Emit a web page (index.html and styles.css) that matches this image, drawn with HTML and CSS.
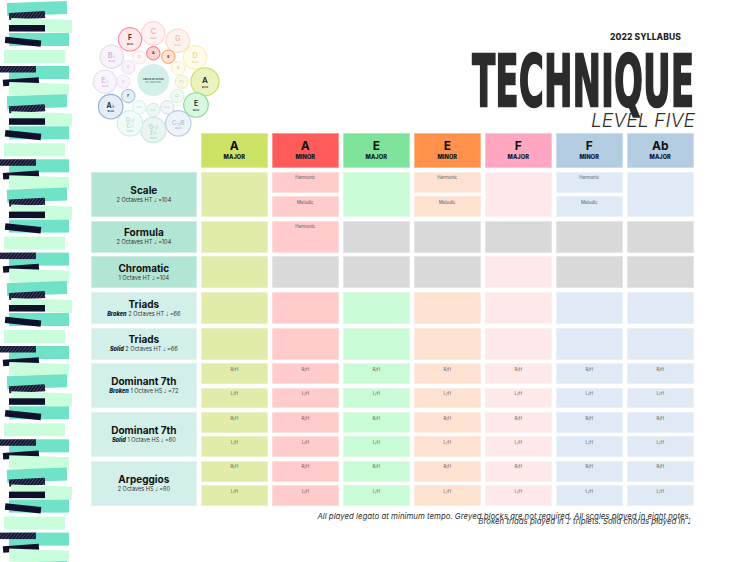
FILE: index.html
```html
<!DOCTYPE html>
<html lang="en">
<head>
<meta charset="utf-8">
<title>Technique Level Five</title>
<link rel="stylesheet" href="styles.css">
</head>
<body>
<div class="page">
  <svg class="strip" viewBox="0 0 72 562" width="72" height="562" aria-hidden="true">
    <defs>
      <pattern id="hatch" width="2.6" height="2.6" patternUnits="userSpaceOnUse" patternTransform="rotate(40)">
        <rect width="2.6" height="2.6" fill="#10112e"/>
        <rect width="0.9" height="2.6" fill="#4a4b68"/>
      </pattern>
      <g id="unit">
        <rect x="7" y="2" width="60" height="13" fill="#6fe2c8" transform="rotate(-2 37 8)"/>
        <rect x="9" y="12" width="36" height="7" fill="url(#hatch)" transform="rotate(-3 27 15)"/>
        <rect x="11" y="19" width="61" height="13" fill="#c9fddb" transform="rotate(2 41 25)"/>
        <rect x="9" y="25" width="36" height="6.5" fill="#0f102c"/>
        <rect x="9" y="33" width="60" height="13" fill="#6fe2c8"/>
        <rect x="5" y="38.5" width="36" height="6.5" fill="#0f102c" transform="rotate(6 23 42)"/>
        <rect x="4" y="50" width="61" height="13" fill="#c9fddb"/>
        <rect x="9" y="66" width="60" height="13" fill="#6fe2c8"/>
        <rect x="0" y="66" width="36" height="6.5" fill="url(#hatch)"/>
        <rect x="3" y="78.5" width="36" height="6.5" fill="#0f102c" transform="rotate(-4 21 82)"/>
        <rect x="9" y="83" width="60" height="13" fill="#c9fddb" transform="rotate(2 39 89)"/>
      </g>
    </defs>
    <use href="#unit" y="0"/>
    <use href="#unit" y="93.3"/>
    <use href="#unit" y="186.6"/>
    <use href="#unit" y="280"/>
    <use href="#unit" y="373.3"/>
    <use href="#unit" y="466.6"/>
    <use href="#unit" y="560"/>
  </svg>

  <main class="main">
    <header class="top">
      <svg class="wheel" viewBox="0 0 130 125" width="130" height="125" aria-label="Circle of fifths">
        <g class="outer">
          <circle cx="63.3" cy="13.3" r="11.7" fill="#fff2f2" stroke="#fdd3d3"/>
          <circle cx="87.7" cy="20.7" r="11.7" fill="#fff3ee" stroke="#fdd6c6"/>
          <circle cx="105" cy="37.3" r="11.7" fill="#fffbea" stroke="#fbefb3"/>
          <circle cx="115" cy="61.7" r="14" fill="#eaf3c0" stroke="#c6dd5c"/>
          <circle cx="106" cy="85" r="12.3" fill="#d9f7de" stroke="#7fdc8e"/>
          <circle cx="88.3" cy="103.3" r="12.7" fill="#eef3f9" stroke="#b7cbe1"/>
          <circle cx="63.3" cy="110" r="12.7" fill="#e9f5f2" stroke="#c7e6de"/>
          <circle cx="40" cy="103.3" r="12.7" fill="#f1fbf9" stroke="#cdeee8"/>
          <circle cx="20.7" cy="86.7" r="12.3" fill="#e5edf6" stroke="#94b0d1"/>
          <circle cx="15" cy="61.7" r="11.7" fill="#faf4fc" stroke="#eadbf2"/>
          <circle cx="21.7" cy="36.7" r="11.7" fill="#f8f2fb" stroke="#e5d5ef"/>
          <circle cx="40" cy="19.3" r="11.7" fill="#ffe9ec" stroke="#f6909f"/>
        </g>
        <g class="inner">
          <circle cx="63.3" cy="33.3" r="6.7" fill="#ffd3d3" stroke="#ff5c5c"/>
          <circle cx="78.3" cy="36.7" r="6.7" fill="#ffe2d0" stroke="#ff914d"/>
          <circle cx="88.3" cy="48.3" r="6.7" fill="#fffbee" stroke="#f7ecbc"/>
          <circle cx="91.7" cy="61.7" r="6.7" fill="#f6f9e6" stroke="#e5eec0"/>
          <circle cx="87.3" cy="76" r="6.7" fill="#effbf2" stroke="#c9efd2"/>
          <circle cx="77.3" cy="87.3" r="6.7" fill="#f3f7fb" stroke="#ccdbe9"/>
          <circle cx="63.3" cy="90" r="6.7" fill="#eef7f5" stroke="#cfe8e2"/>
          <circle cx="49.3" cy="87.3" r="6.7" fill="#f3fcfa" stroke="#d2f1eb"/>
          <circle cx="38.3" cy="76" r="6.7" fill="#e5edf6" stroke="#94b0d1"/>
          <circle cx="33.3" cy="61.7" r="6.7" fill="#faf5fc" stroke="#ecdff3"/>
          <circle cx="38.3" cy="47.3" r="6.7" fill="#f9f4fb" stroke="#e7d9f0"/>
          <circle cx="49.3" cy="37.3" r="6.7" fill="#fff7f8" stroke="#fbdde1"/>
        </g>
        <circle cx="63.3" cy="60" r="16" fill="#d3efe9"/>
        <text class="wc" x="63.3" y="59.5">CIRCLE OF FIFTHS</text>
        <text class="wcs" x="63.3" y="62.5">KEY SIGNATURES</text>

        <g class="ol">
          <text x="63.3" y="14" fill="#e4b5b5">C</text>
          <text x="87.7" y="21.4" fill="#efbfae">G</text>
          <text x="105" y="38" fill="#e9d894">D</text>
          <text x="115" y="63" fill="#222" class="big">A</text>
          <text x="106" y="86" fill="#222">E</text>
          <text x="88.3" y="104.5" fill="#a9bdd3" class="mid">C♭/B</text>
          <text x="63.3" y="108.5" fill="#a8cfc4" class="mid">G♭/</text>
          <text x="63.3" y="115" fill="#a8cfc4" class="mid">F♯</text>
          <text x="40" y="101.8" fill="#acd9d0" class="mid">D♭/</text>
          <text x="40" y="108.3" fill="#acd9d0" class="mid">C♯</text>
          <text x="20.7" y="87.5" fill="#222">A♭</text>
          <text x="15" y="62.5" fill="#cfb9dc">E♭</text>
          <text x="21.7" y="37.5" fill="#c9b3d9">B♭</text>
          <text x="40" y="20" fill="#222">F</text>
        </g>
        <g class="om">
          <text x="63.3" y="18.5" fill="#e4b5b5">MAJOR</text>
          <text x="87.7" y="25.9" fill="#efbfae">MAJOR</text>
          <text x="105" y="42.5" fill="#e9d894">MAJOR</text>
          <text x="115" y="68" fill="#333">MAJOR</text>
          <text x="106" y="90.5" fill="#333">MAJOR</text>
          <text x="88.3" y="109" fill="#a9bdd3">MAJOR</text>
          <text x="63.3" y="119" fill="#a8cfc4">MAJOR</text>
          <text x="40" y="112.3" fill="#acd9d0">MAJOR</text>
          <text x="20.7" y="92" fill="#333">MAJOR</text>
          <text x="15" y="67" fill="#cfb9dc">MAJOR</text>
          <text x="21.7" y="42" fill="#c9b3d9">MAJOR</text>
          <text x="40" y="24.5" fill="#333">MAJOR</text>
        </g>
        <g class="il">
          <text x="63.3" y="34.3" fill="#222">A</text>
          <text x="78.3" y="37.7" fill="#222">E</text>
          <text x="88.3" y="49.3" fill="#dccd95">B</text>
          <text x="91.7" y="62.7" fill="#c8d39a">F♯</text>
          <text x="87.3" y="77" fill="#a9d8b5">C♯</text>
          <text x="77.3" y="88" fill="#b1c4d8" class="sm">G♯/A♭</text>
          <text x="63.3" y="90.7" fill="#aed2c9" class="sm">D♯/E♭</text>
          <text x="49.3" y="88" fill="#ace0d5" class="sm">A♯/B♭</text>
          <text x="38.3" y="77" fill="#222">F</text>
          <text x="33.3" y="62.7" fill="#d8c5e2">C</text>
          <text x="38.3" y="48.3" fill="#d3bfe0">G</text>
          <text x="49.3" y="38.3" fill="#efbcc3">D</text>
        </g>
      </svg>
      <div class="title">
        <div class="syllabus">2022 SYLLABUS</div>
        <h1 class="technique"><span>TECHNIQUE</span></h1>
        <div class="level">LEVEL FIVE</div>
      </div>
    </header>

    <div class="grid">
      <div class="corner"></div>
      <div class="head amaj-h"><b>A</b><span>MAJOR</span></div>
      <div class="head amin-h"><b>A</b><span>MINOR</span></div>
      <div class="head emaj-h"><b>E</b><span>MAJOR</span></div>
      <div class="head emin-h"><b>E</b><span>MINOR</span></div>
      <div class="head fmaj-h"><b>F</b><span>MAJOR</span></div>
      <div class="head fmin-h"><b>F</b><span>MINOR</span></div>
      <div class="head abmaj-h"><b>Ab</b><span>MAJOR</span></div>

      <!-- Scale -->
      <div class="label lab1"><b>Scale</b><span>2 Octaves HT ♩ =104</span></div>
      <div class="cell amaj"></div>
      <div class="split"><div class="cell amin">Harmonic</div><div class="cell amin">Melodic</div></div>
      <div class="cell emaj"></div>
      <div class="split"><div class="cell emin">Harmonic</div><div class="cell emin">Melodic</div></div>
      <div class="cell fmaj"></div>
      <div class="split"><div class="cell fmin">Harmonic</div><div class="cell fmin">Melodic</div></div>
      <div class="cell abmaj"></div>

      <!-- Formula -->
      <div class="label lab1"><b>Formula</b><span>2 Octaves HT ♩ =104</span></div>
      <div class="cell amaj"></div>
      <div class="cell amin">Harmonic</div>
      <div class="cell grey"></div>
      <div class="cell grey"></div>
      <div class="cell grey"></div>
      <div class="cell grey"></div>
      <div class="cell grey"></div>

      <!-- Chromatic -->
      <div class="label lab1"><b>Chromatic</b><span>1 Octave HT ♩ =104</span></div>
      <div class="cell amaj"></div>
      <div class="cell grey"></div>
      <div class="cell grey"></div>
      <div class="cell grey"></div>
      <div class="cell fmaj"></div>
      <div class="cell grey"></div>
      <div class="cell grey"></div>

      <!-- Triads broken -->
      <div class="label lab2"><b>Triads</b><span><em>Broken</em> 2 Octaves HT ♩ =66</span></div>
      <div class="cell amaj"></div>
      <div class="cell amin"></div>
      <div class="cell emaj"></div>
      <div class="cell emin"></div>
      <div class="cell fmaj"></div>
      <div class="cell fmin"></div>
      <div class="cell abmaj"></div>

      <!-- Triads solid -->
      <div class="label lab2"><b>Triads</b><span><em>Solid</em> 2 Octaves HT ♩ =66</span></div>
      <div class="cell amaj"></div>
      <div class="cell amin"></div>
      <div class="cell emaj"></div>
      <div class="cell emin"></div>
      <div class="cell fmaj"></div>
      <div class="cell fmin"></div>
      <div class="cell abmaj"></div>

      <!-- Dominant 7th broken -->
      <div class="label lab2"><b>Dominant 7th</b><span><em>Broken</em> 1 Octave HS ♩ =72</span></div>
      <div class="split"><div class="cell amaj">R/H</div><div class="cell amaj">L/H</div></div>
      <div class="split"><div class="cell amin">R/H</div><div class="cell amin">L/H</div></div>
      <div class="split"><div class="cell emaj">R/H</div><div class="cell emaj">L/H</div></div>
      <div class="split"><div class="cell emin">R/H</div><div class="cell emin">L/H</div></div>
      <div class="split"><div class="cell fmaj">R/H</div><div class="cell fmaj">L/H</div></div>
      <div class="split"><div class="cell fmin">R/H</div><div class="cell fmin">L/H</div></div>
      <div class="split"><div class="cell abmaj">R/H</div><div class="cell abmaj">L/H</div></div>

      <!-- Dominant 7th solid -->
      <div class="label lab2"><b>Dominant 7th</b><span><em>Solid</em> 1 Octave HS ♩ =60</span></div>
      <div class="split"><div class="cell amaj">R/H</div><div class="cell amaj">L/H</div></div>
      <div class="split"><div class="cell amin">R/H</div><div class="cell amin">L/H</div></div>
      <div class="split"><div class="cell emaj">R/H</div><div class="cell emaj">L/H</div></div>
      <div class="split"><div class="cell emin">R/H</div><div class="cell emin">L/H</div></div>
      <div class="split"><div class="cell fmaj">R/H</div><div class="cell fmaj">L/H</div></div>
      <div class="split"><div class="cell fmin">R/H</div><div class="cell fmin">L/H</div></div>
      <div class="split"><div class="cell abmaj">R/H</div><div class="cell abmaj">L/H</div></div>

      <!-- Arpeggios -->
      <div class="label lab2"><b>Arpeggios</b><span>2 Octaves HS ♩ =80</span></div>
      <div class="split"><div class="cell amaj">R/H</div><div class="cell amaj">L/H</div></div>
      <div class="split"><div class="cell amin">R/H</div><div class="cell amin">L/H</div></div>
      <div class="split"><div class="cell emaj">R/H</div><div class="cell emaj">L/H</div></div>
      <div class="split"><div class="cell emin">R/H</div><div class="cell emin">L/H</div></div>
      <div class="split"><div class="cell fmaj">R/H</div><div class="cell fmaj">L/H</div></div>
      <div class="split"><div class="cell fmin">R/H</div><div class="cell fmin">L/H</div></div>
      <div class="split"><div class="cell abmaj">R/H</div><div class="cell abmaj">L/H</div></div>
    </div>

    <p class="note">All played legato at minimum tempo. Greyed blocks are not required. All scales played in eight notes.<br>Broken triads played in ♪ triplets. Solid chords played in ♩</p>
  </main>
</div>
</body>
</html>
```

FILE: styles.css
```css
* { box-sizing: border-box; }

html, body {
  margin: 0;
  padding: 0;
  background: #ffffff;
}

body {
  font-family: Inter, "Open Sans", "DejaVu Sans", sans-serif;
  color: #111;
  width: 750px;
  height: 562px;
  overflow: hidden;
}

.page {
  display: flex;
  height: 562px;
}

.strip {
  display: block;
  flex: 0 0 72px;
}

.main {
  margin-left: 18.7px;
  width: 603.3px;
  display: flex;
  flex-direction: column;
}

/* ---------- top area ---------- */
.top {
  height: 133.3px;
  display: flex;
  justify-content: space-between;
  align-items: flex-start;
}

.wheel {
  display: block;
  margin-top: 20px;
  margin-left: -1px;
}

.wheel circle { stroke-width: 1.1; }
.wheel .inner circle { stroke-width: 0.9; }

.wheel text {
  font-family: Inter, "DejaVu Sans", sans-serif;
  text-anchor: middle;
}

.wheel .wc { font-size: 2.3px; font-weight: 700; fill: #333; }
.wheel .wcs { font-size: 1.8px; fill: #666; }
.wheel .ol text { font-size: 7px; font-weight: 600; }
.wheel .ol text.big { font-size: 8px; }
.wheel .ol text.mid { font-size: 5.6px; font-weight: 500; }
.wheel .om text { font-size: 1.7px; font-weight: 700; }
.wheel .il text { font-size: 3.6px; font-weight: 600; }
.wheel .il text.sm { font-size: 2.2px; }

.title {
  display: flex;
  flex-direction: column;
  align-items: flex-end;
  padding-top: 32px;
}

.syllabus {
  font-size: 8.5px;
  font-weight: 800;
  line-height: 11px;
  letter-spacing: 0.1px;
  color: #1f1f1f;
  margin-right: 13px;
}

.technique {
  margin: 13px -1px 0 0;
  font-family: "DejaVu Sans", sans-serif;
  font-stretch: condensed;
  font-weight: 700;
  font-size: 71px;
  line-height: 52px;
  height: 52px;
  color: #2b2b2b;
  white-space: nowrap;
}

.technique span {
  display: inline-block;
  transform: scaleX(0.525);
  transform-origin: right center;
  -webkit-text-stroke: 2.4px #2b2b2b;
  letter-spacing: 1px;
}

.level {
  margin-top: 2px;
  margin-right: -1px;
  font-size: 19.3px;
  font-weight: 300;
  font-style: italic;
  line-height: 20px;
  color: #2f2f2f;
}

/* ---------- grid ---------- */
.grid {
  display: grid;
  grid-template-columns: 106.3px repeat(7, 67.3px);
  grid-template-rows: 35px 45px 32px 32px 32px 32px 45px 45px 45px;
  gap: 3.7px;
}

.head, .cell, .label {
  box-shadow: inset 0 0 0 1px rgba(255, 255, 255, 0.35);
}

.head {
  display: flex;
  flex-direction: column;
  align-items: center;
  justify-content: center;
  color: #111;
}

.head b {
  font-size: 12px;
  font-weight: 700;
  line-height: 12px;
}

.head span {
  font-size: 5.6px;
  font-weight: 800;
  line-height: 7px;
  margin-top: 2px;
  letter-spacing: 0.1px;
}

.amaj-h { background: #cbe265; }
.amin-h { background: #ff5b5b; }
.emaj-h { background: #7ee39a; }
.emin-h { background: #ff914d; }
.fmaj-h { background: #ffa7c0; }
.fmin-h { background: #b3cce2; }
.abmaj-h { background: #b3cce2; }

.label {
  display: flex;
  flex-direction: column;
  align-items: center;
  justify-content: center;
  text-align: center;
  color: #111;
}

.label b {
  font-size: 10px;
  font-weight: 700;
  line-height: 11px;
}

.label span {
  font-size: 5.6px;
  line-height: 8px;
  color: #333;
  white-space: nowrap;
}

.label em {
  font-weight: 800;
  font-style: italic;
  color: #111;
}

.lab1 { background: #b3e5d5; }
.lab2 { background: #d3efea; }

.cell {
  font-size: 4.4px;
  line-height: 5px;
  color: #555;
  text-align: center;
  padding-top: 3.5px;
}

.split {
  display: flex;
  flex-direction: column;
  gap: 3.6px;
}

.split .cell { flex: 1 1 0; }

.amaj { background: #e1ecaa; }
.amin { background: #ffcbcb; }
.emaj { background: #c9fcd6; }
.emin { background: #fde2d2; }
.fmaj { background: #ffe8ea; }
.fmin { background: #e0eaf4; }
.abmaj { background: #e0eaf4; }
.grey { background: #d9d9d9; }

/* ---------- footer note ---------- */
.note {
  margin: 8px 3px 0 0;
  font-size: 7.85px;
  line-height: 5px;
  font-style: italic;
  text-align: right;
  color: #333;
}
```
